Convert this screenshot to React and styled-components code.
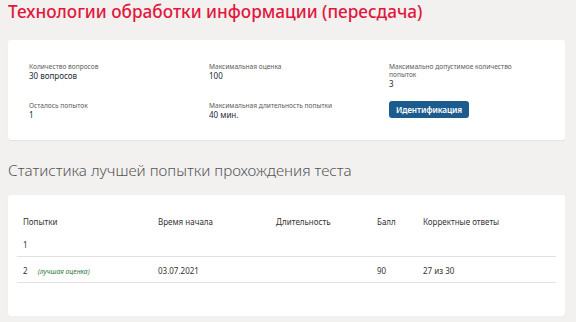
import React from 'react';
import styled, { createGlobalStyle } from 'styled-components';

const GlobalStyle = createGlobalStyle`
  html, body {
    margin: 0;
    padding: 0;
    background: #f2f1f0;
    font-family: "Noto Sans", "Open Sans", Arial, sans-serif;
  }
`;

const Page = styled.div`
  padding: 0 11px 0 8px;
`;

const Title = styled.h1`
  margin: 0;
  padding-top: 1px;
  height: 39px;
  font-size: 17.2px;
  line-height: 22px;
  font-weight: 500;
  color: #e2173c;
`;

const Card = styled.div`
  background: #fff;
  border-radius: 3px;
  box-shadow: 0 1px 1px rgba(0, 0, 0, 0.06);
`;

const InfoCard = styled(Card)`
  height: 100px;
  box-sizing: border-box;
  padding: 23px 0 0 21px;
  display: grid;
  grid-template-columns: 180px 180px 1fr;
  grid-template-rows: 39px auto;
`;

const Field = styled.div`
  display: flex;
  flex-direction: column;
`;

const Label = styled.span`
  font-size: 6.6px;
  line-height: 8px;
  color: #5a5a5a;
  max-width: ${p => (p.$narrow ? '132px' : 'none')};
`;

const Value = styled.span`
  font-size: 8px;
  line-height: 9px;
  color: #1b2838;
`;

const Button = styled.button`
  align-self: start;
  justify-self: start;
  margin-top: -1px;
  width: 80px;
  height: 17px;
  padding: 0;
  border: none;
  border-radius: 3px;
  background: #1c5b8e;
  color: #fff;
  font-family: "Noto Sans", Arial, sans-serif;
  font-size: 8.2px;
  font-weight: 600;
  letter-spacing: -0.1px;
`;

const Heading = styled.h2`
  margin: 0;
  height: 55px;
  display: flex;
  align-items: center;
  padding-top: 5px;
  box-sizing: border-box;
  font-size: 15.2px;
  font-weight: 300;
  color: #555;
`;

const StatsCard = styled(Card)`
  padding: 14px 9px 33px 9px;
`;

const Row = styled.div`
  display: grid;
  grid-template-columns: 135px 118px 101px 46px 1fr;
  align-items: center;
  height: ${p => (p.$head ? '24px' : '23px')};
  border-bottom: ${p => (p.$line ? '1px solid #e2e2e2' : 'none')};
  padding-top: ${p => (p.$gap ? '2px' : '0')};
`;

const Cell = styled.div`
  padding-left: 6px;
  font-size: 8px;
  color: #333;
  white-space: nowrap;
`;

const Best = styled.em`
  margin-left: 8px;
  font-size: 6.8px;
  color: #2f7a3a;
`;

const info = [
  { label: 'Количество вопросов', value: '30 вопросов' },
  { label: 'Максимальная оценка', value: '100' },
  { label: 'Максимально допустимое количество попыток', value: '3', narrow: true },
  { label: 'Осталось попыток', value: '1' },
  { label: 'Максимальная длительность попытки', value: '40 мин.' },
];

const columns = ['Попытки', 'Время начала', 'Длительность', 'Балл', 'Корректные ответы'];

export default function App() {
  return (
    <>
      <GlobalStyle />
      <Page>
        <Title>Технологии обработки информации (пересдача)</Title>
        <InfoCard>
          {info.map(f => (
            <Field key={f.label}>
              <Label $narrow={f.narrow}>{f.label}</Label>
              <Value>{f.value}</Value>
            </Field>
          ))}
          <Button>Идентификация</Button>
        </InfoCard>
        <Heading>Статистика лучшей попытки прохождения теста</Heading>
        <StatsCard>
          <Row $head>
            {columns.map(c => <Cell key={c}>{c}</Cell>)}
          </Row>
          <Row $line>
            <Cell>1</Cell>
            <Cell />
            <Cell />
            <Cell />
            <Cell />
          </Row>
          <Row $line $gap>
            <Cell>2 <Best>(лучшая оценка)</Best></Cell>
            <Cell>03.07.2021</Cell>
            <Cell />
            <Cell>90</Cell>
            <Cell>27 из 30</Cell>
          </Row>
        </StatsCard>
      </Page>
    </>
  );
}
